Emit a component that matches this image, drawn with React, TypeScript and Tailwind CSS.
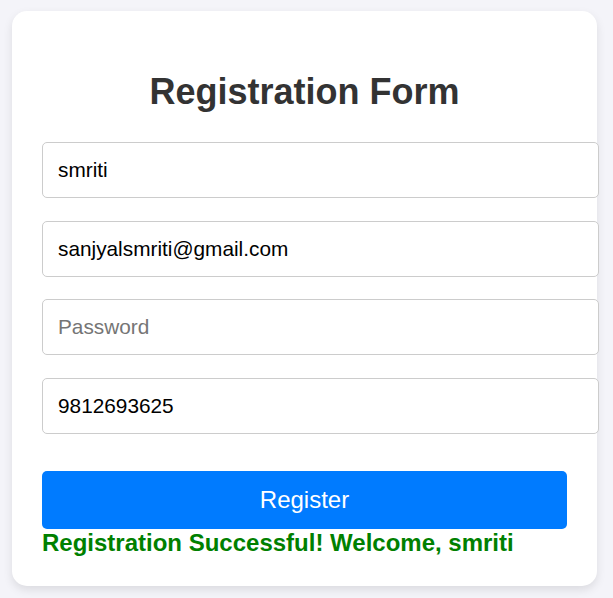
import { useState } from 'react';

export default function App() {
    const [name, setName] = useState('smriti');
    const [email, setEmail] = useState('sanjyalsmriti@gmail.com');
    const [password, setPassword] = useState('');
    const [phone, setPhone] = useState('9812693625');

    const inputCls =
        'block w-[557px] h-[56px] px-[15px] border border-[#ccc] rounded-[5px] bg-white text-[20.8px] text-black outline-none placeholder:text-[#757575]';

    return (
        <div className="min-h-screen w-full bg-[#f4f4f9] pt-[11px] pl-[12px] font-['Liberation_Sans',Arial,sans-serif]">
            <div className="w-[585px] bg-white rounded-[15px] shadow-[0_4px_10px_rgba(0,0,0,0.1)] px-[30px] pt-[30px] pb-[30px]">
                {/* Title */}
                <h2 className="mt-[30px] mb-[30px] h-[41px] leading-[41px] text-center text-[36px] font-bold text-[#333]">
                    Registration Form
                </h2>

                {/* Fields */}
                <div className="flex flex-col gap-[22.5px]">
                    <input className={inputCls} type="text" placeholder="Name" value={name} onChange={e => setName(e.target.value)} />
                    <input className={inputCls} type="email" placeholder="Email" value={email} onChange={e => setEmail(e.target.value)} />
                    <input className={inputCls} type="password" placeholder="Password" value={password} onChange={e => setPassword(e.target.value)} />
                    <input className={inputCls} type="text" placeholder="Phone" value={phone} onChange={e => setPhone(e.target.value)} />
                </div>

                <button className="mt-[37.5px] w-full h-[57.5px] bg-[#007bff] text-white text-[24px] rounded-[5px]">
                    Register
                </button>

                {/* Success message */}
                <p className="h-[27.5px] leading-[27.5px] text-[24px] font-bold text-[#008000]">
                    Registration Successful! Welcome, {name}
                </p>
            </div>
        </div>
    );
}
